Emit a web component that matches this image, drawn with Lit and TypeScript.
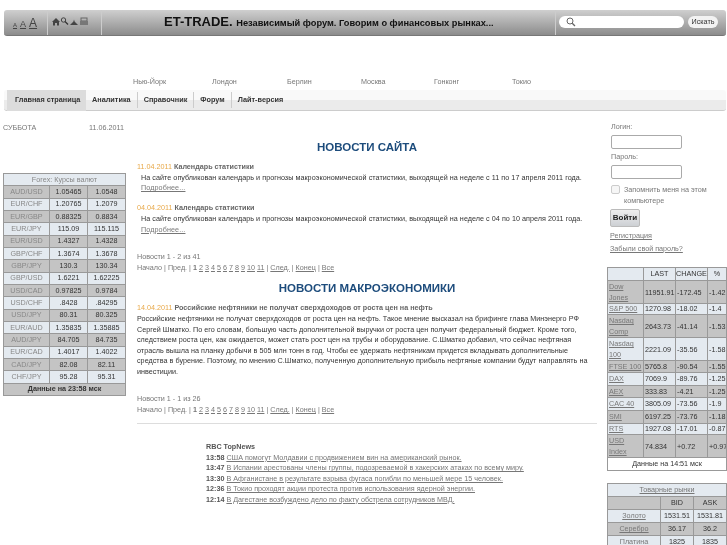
import { LitElement, html, css } from "lit";
import { customElement } from "lit/decorators.js";

const forex = [
  ["AUD/USD","1.05465","1.0548"],["EUR/CHF","1.20765","1.2079"],["EUR/GBP","0.88325","0.8834"],["EUR/JPY","115.09","115.115"],
  ["EUR/USD","1.4327","1.4328"],["GBP/CHF","1.3674","1.3678"],["GBP/JPY","130.3","130.34"],["GBP/USD","1.6221","1.62225"],
  ["USD/CAD","0.97825","0.9784"],["USD/CHF",".8428",".84295"],["USD/JPY","80.31","80.325"],["EUR/AUD","1.35835","1.35885"],
  ["AUD/JPY","84.705","84.735"],["EUR/CAD","1.4017","1.4022"],["CAD/JPY","82.08","82.11"],["CHF/JPY","95.28","95.31"],
];
const idx: [string,string,string,string,number][] = [
  ["Dow Jones","11951.91","-172.45","-1.42",23],["S&P 500","1270.98","-18.02","-1.4",11],["Nasdaq Comp","2643.73","-41.14","-1.53",23],
  ["Nasdaq 100","2221.09","-35.56","-1.58",23],["FTSE 100","5765.8","-90.54","-1.55",12],["DAX","7069.9","-89.76","-1.25",13],
  ["AEX","333.83","-4.21","-1.25",12],["CAC 40","3805.09","-73.56","-1.9",13],["SMI","6197.25","-73.76","-1.18",13],
  ["RTS","1927.08","-17.01","-0.87",11],["USD Index","74.834","+0.72","+0.97",23],
];
const goods = [["Золото","1531.51","1531.81"],["Серебро","36.17","36.2"],["Платина","1825","1835"]];
const rbc = [
  ["13:58","США помогут Молдавии с продвижением вин на американский рынок."],
  ["13:47","В Испании арестованы члены группы, подозреваемой в хакерских атаках по всему миру."],
  ["13:30","В Афганистане в результате взрыва фугаса погибли по меньшей мере 15 человек."],
  ["12:36","В Токио проходят акции протеста против использования ядерной энергии."],
  ["12:14","В Дагестане возбуждено дело по факту обстрела сотрудников МВД."],
];
const cities: [string, number][] = [["Нью-Йорк",79],["Лондон",75],["Берлин",74],["Москва",73],["Гонконг",78],["Токио",30]];
const nav = ["Главная страница","Аналитика","Справочник","Форум","Лайт-версия"];

const pager = (a: string) => html`<div class="pager">
  <div>${a}</div>
  <div>Начало | Пред. | <b>1</b> ${[2,3,4,5,6,7,8,9,10,11].map(n => html`<a>${n}</a> `)}| <a>След.</a> | <a>Конец</a> | <a>Все</a></div>
</div>`;

@customElement("app-root")
export class AppRoot extends LitElement {
  static styles = css`
    :host { display: block; width: 727px; height: 545px; overflow: hidden; background: #fff; font: 7.2px/10.7px "Liberation Sans", Arial, sans-serif; color: #777; filter: blur(0.35px); }
    a { text-decoration: underline; color: #777; }
    .top { margin: 10px 1px 0 4px; height: 26px; display: flex; border-radius: 3px; background: linear-gradient(#cfcfcf, #8c8c8c); box-sizing: border-box; border-bottom: 1px solid #777; }
    .sizes { width: 44px; border-right: 1px solid #ccc; display: flex; align-items: baseline; gap: 3px; padding: 7px 0 0 9px; box-sizing: border-box; color: #444; }
    .sizes span { text-decoration: underline; line-height: 12px; }
    .icons { width: 54px; border-right: 1px solid #ccc; padding: 7px 0 0 4px; box-sizing: border-box; }
    .title { flex: 1; padding-left: 62px; color: #111; font-weight: bold; font-size: 9.25px; line-height: 24px; white-space: nowrap; }
    .title b { font-size: 13px; font-weight: bold; margin-right: 1px; }
    .search { width: 171px; border-left: 1px solid #ccc; display: flex; align-items: center; gap: 4px; padding: 0 0 1px 3px; box-sizing: border-box; }
    .sfield { width: 125px; height: 12px; border-radius: 6px; background: #fff; padding-left: 7px; box-sizing: border-box; }
    .sbtn { width: 30px; height: 12px; border-radius: 6px; background: #f2f2f2; text-align: center; color: #333; line-height: 12px; font-size: 7.2px; }
    .cities { height: 10px; margin-top: 41px; display: flex; padding-left: 133px; line-height: 10px; }
    .cities span { display: block; }
    .nav { margin: 3px 1px 0 4px; height: 21px; border-radius: 3px; display: flex; align-items: stretch; background: linear-gradient(#f9f9f9 50%, #ebebeb 50%); border-bottom: 1px solid #ccc; box-sizing: border-box; padding-left: 3px; font-weight: bold; font-size: 7.3px; color: #333; white-space: nowrap; }
    .nav div { padding: 0 6px; border-right: 1px solid #ccc; margin: 2px 0; line-height: 16px; }
    .nav div:first-child { background: #dcdcdc; border: 0; margin: 0 0 -1px; padding-left: 8px; line-height: 20px; width: 79px; box-sizing: border-box; }
    .nav div:last-child { border: 0; }
    .cols { display: flex; }
    .left { width: 122px; margin: 12px 0 0 3px; flex: none; }
    .date { display: flex; justify-content: space-between; height: 10px; line-height: 10px; padding-right: 1px; }
    table { border-collapse: collapse; table-layout: fixed; text-align: center; color: #333; font-size: 7.2px; line-height: 10px; }
    td, th { border: 1px solid #999; padding: 0; font-weight: normal; overflow: hidden; }
    .forex { width: 122px; height: 223px; margin-top: 40px; border: 1px solid #888; }
    .g { background: #c4c4c4; }
    .b { background: #e4eaf0; }
    .lbl { color: #888; }
    .foot { font-weight: bold; background: #c4c4c4; color: #333; }
    .main { width: 460px; margin-left: 12px; flex: none; }
    h2 { margin: 0; text-align: center; color: #1d4c7c; font: bold 11.5px/14px "Liberation Sans", Arial, sans-serif; }
    .h1 { margin-top: 29px; }
    .h2 { margin-top: 8px; }
    .item { margin-top: 9px; white-space: nowrap; }
    .item.first { margin-top: 8px; }
    .head { color: #666; font-weight: bold; }
    .head i { color: #e8a94a; font-style: normal; font-weight: normal; }
    .body { color: #333; padding-left: 4px; letter-spacing: .04px; }
    .more { padding-left: 4px; letter-spacing: .1px; }
    .pager { margin-top: 17px; height: 21px; }
    .long { color: #333; letter-spacing: .03px; line-height: 10.6px; white-space: nowrap; }
    .hr { border-top: 1px solid #ddd; margin-top: 8px; }
    .rbc { margin: 18px 0 0 69px; color: #444; white-space: nowrap; line-height: 10.4px; }
    .rbc b { color: #555; }
    .right { width: 120px; margin-left: 10px; flex: none; }
    .login { padding-left: 3px; height: 145px; margin-top: 11px; box-sizing: border-box; }
    .login label { display: block; line-height: 10px; margin-left: 1px; }
    .inp { width: 71px; height: 14px; border: 1px solid #aaa; border-radius: 2px; box-sizing: border-box; margin: 3px 0 3px 1px; background: #fff; }
    .rem { display: flex; gap: 4px; margin: 5px 0 0 1px; line-height: 11px; }
    .chk { width: 9px; height: 9px; border: 1px solid #ccc; border-radius: 2px; margin-top: 1px; flex: none; box-sizing: border-box; background: #f6f6f6; }
    .btn { width: 30px; height: 18px; margin-top: 3px; box-sizing: border-box; border: 1px solid #bbb; border-radius: 2px; background: linear-gradient(#eee, #cdd0d4); color: #222; text-align: center; line-height: 16px; font-size: 8px; font-weight: bold; }
    .l1 { margin-top: 4px; }
    .l2 { margin-top: 2px; }
    .idx { width: 119px; text-align: left; border: 1px solid #777; line-height: 10px; }
    .idx td { padding-left: 1px; }
    .idx .c { text-align: center; padding: 0; }
    .idx .two { line-height: 11px; }
    .w { background: #fff; }
    .goods { width: 119px; margin-top: 12px; border: 1px solid #999; }
    .goods tr { height: 13px; }
  `;

  render() {
    return html`
      <div class="top">
        <div class="sizes"><span style="font-size:6px">A</span><span style="font-size:9px">A</span><span style="font-size:12px">A</span></div>
        <div class="icons">
          <svg width="40" height="10" viewBox="0 0 40 10" fill="#444">
            <path d="M0 5 L4 1 L8 5 L7 5 L7 8.500 L1 8.500 L1 5Z M3 6v2.500h2V6z"/>
            <circle cx="11.500" cy="3" r="2.200" fill="none" stroke="#444"/><path d="M13 4.500 L16 7.500" stroke="#333" stroke-width="1.200"/>
            <path d="M18 8 L22 4 L26 8Z" /><path d="M21 5 L22 2.500 L23 5Z" fill="#666"/>
            <rect x="29" y="1" width="6" height="3" fill="none" stroke="#666"/><rect x="28" y="4" width="8" height="4" fill="#777"/>
          </svg>
        </div>
        <div class="title"><b>ET-TRADE.</b> Независимый форум. Говорим о финансовых рынках...</div>
        <div class="search">
          <div class="sfield">
            <svg width="10" height="12" viewBox="0 0 10 12" fill="none" stroke="#666"><circle cx="4" cy="5" r="3"/><path d="M6.200 7.200 L9 10" stroke-width="1.300"/></svg>
          </div>
          <div class="sbtn">Искать</div>
        </div>
      </div>
      <div class="cities">${cities.map(c => html`<span style="width:${c[1]}px">${c[0]}</span>`)}</div>
      <div class="nav">${nav.map(n => html`<div>${n}</div>`)}</div>
      <div class="cols">
        <div class="left">
          <div class="date"><span>СУББОТА</span><span>11.06.2011</span></div>
          <table class="forex">
            <colgroup><col style="width:46px"/><col style="width:38px"/><col style="width:38px"/></colgroup>
            <tr class="b"><td colspan="3" class="lbl">Forex: Курсы валют</td></tr>
            ${forex.map((r, i) => html`<tr class=${i % 2 ? "b" : "g"}><td class="lbl">${r[0]}</td><td>${r[1]}</td><td>${r[2]}</td></tr>`)}
            <tr><td colspan="3" class="foot">Данные на 23:58 мск</td></tr>
          </table>
        </div>
        <div class="main">
          <h2 class="h1">НОВОСТИ САЙТА</h2>
          <div class="item first">
            <div class="head"><i>11.04.2011</i> Календарь статистики</div>
            <div class="body">На сайте опубликован календарь и прогнозы макроэкономической статистики, выходящей на неделе с 11 по 17 апреля 2011 года.</div>
            <div class="more"><a>Подробнее...</a></div>
          </div>
          <div class="item">
            <div class="head"><i>04.04.2011</i> Календарь статистики</div>
            <div class="body">На сайте опубликован календарь и прогнозы макроэкономической статистики, выходящей на неделе с 04 по 10 апреля 2011 года.</div>
            <div class="more"><a>Подробнее...</a></div>
          </div>
          ${pager("Новости 1 - 2 из 41")}
          <h2 class="h2">НОВОСТИ МАКРОЭКОНОМИКИ</h2>
          <div class="item first">
            <div class="head"><i>14.04.2011</i> Российские нефтяники не получат сверхдоходов от роста цен на нефть</div>
            <div class="long">Российские нефтяники не получат сверхдоходов от роста цен на нефть. Такое мнение высказал на брифинге глава Минэнерго РФ<br/>Сергей Шматко. По его словам, большую часть дополнительной выручки от роста цен получит федеральный бюджет. Кроме того,<br/>следствием роста цен, как ожидается, может стать рост цен на трубы и оборудование. С.Шматко добавил, что сейчас нефтяная<br/>отрасль вышла на планку добычи в 505 млн тонн в год. Чтобы ее удержать нефтяникам придется вкладывать дополнительные<br/>средства в бурение. Поэтому, по мнению С.Шматко, полученную дополнительную прибыль нефтяные компании будут направлять на<br/>инвестиции.</div>
          </div>
          ${pager("Новости 1 - 1 из 26")}
          <div class="hr"></div>
          <div class="rbc">
            <b>RBC TopNews</b>
            ${rbc.map(r => html`<div><b>${r[0]}</b> <a>${r[1]}</a></div>`)}
          </div>
        </div>
        <div class="right">
          <div class="login">
            <label>Логин:</label>
            <div class="inp"></div>
            <label>Пароль:</label>
            <div class="inp"></div>
            <div class="rem"><div class="chk"></div><div>Запомнить меня на этом<br/>компьютере</div></div>
            <div class="btn">Войти</div>
            <div class="l1"><a>Регистрация</a></div>
            <div class="l2"><a>Забыли свой пароль?</a></div>
          </div>
          <table class="idx">
            <colgroup><col style="width:36px"/><col style="width:32px"/><col style="width:32px"/><col style="width:19px"/></colgroup>
            <tr class="b" style="height:13px"><td></td><td class="c">LAST</td><td class="c">CHANGE</td><td class="c">%</td></tr>
            ${idx.map((r, i) => html`<tr class="${i % 2 ? "b" : "g"} ${r[4] > 20 ? "two" : ""}" style="height:${r[4]}px"><td><a>${r[0]}</a></td><td>${r[1]}</td><td>${r[2]}</td><td>${r[3]}</td></tr>`)}
            <tr class="w" style="height:13px"><td colspan="4" class="c">Данные на 14:51 мск</td></tr>
          </table>
          <table class="goods">
            <colgroup><col style="width:53px"/><col style="width:33px"/><col style="width:33px"/></colgroup>
            <tr class="b"><td colspan="3"><a>Товарные рынки</a></td></tr>
            <tr class="g"><td></td><td>BID</td><td>ASK</td></tr>
            ${goods.map((r, i) => html`<tr class=${i % 2 ? "g" : "b"}><td><a>${r[0]}</a></td><td>${r[1]}</td><td>${r[2]}</td></tr>`)}
          </table>
        </div>
      </div>
    `;
  }
}
